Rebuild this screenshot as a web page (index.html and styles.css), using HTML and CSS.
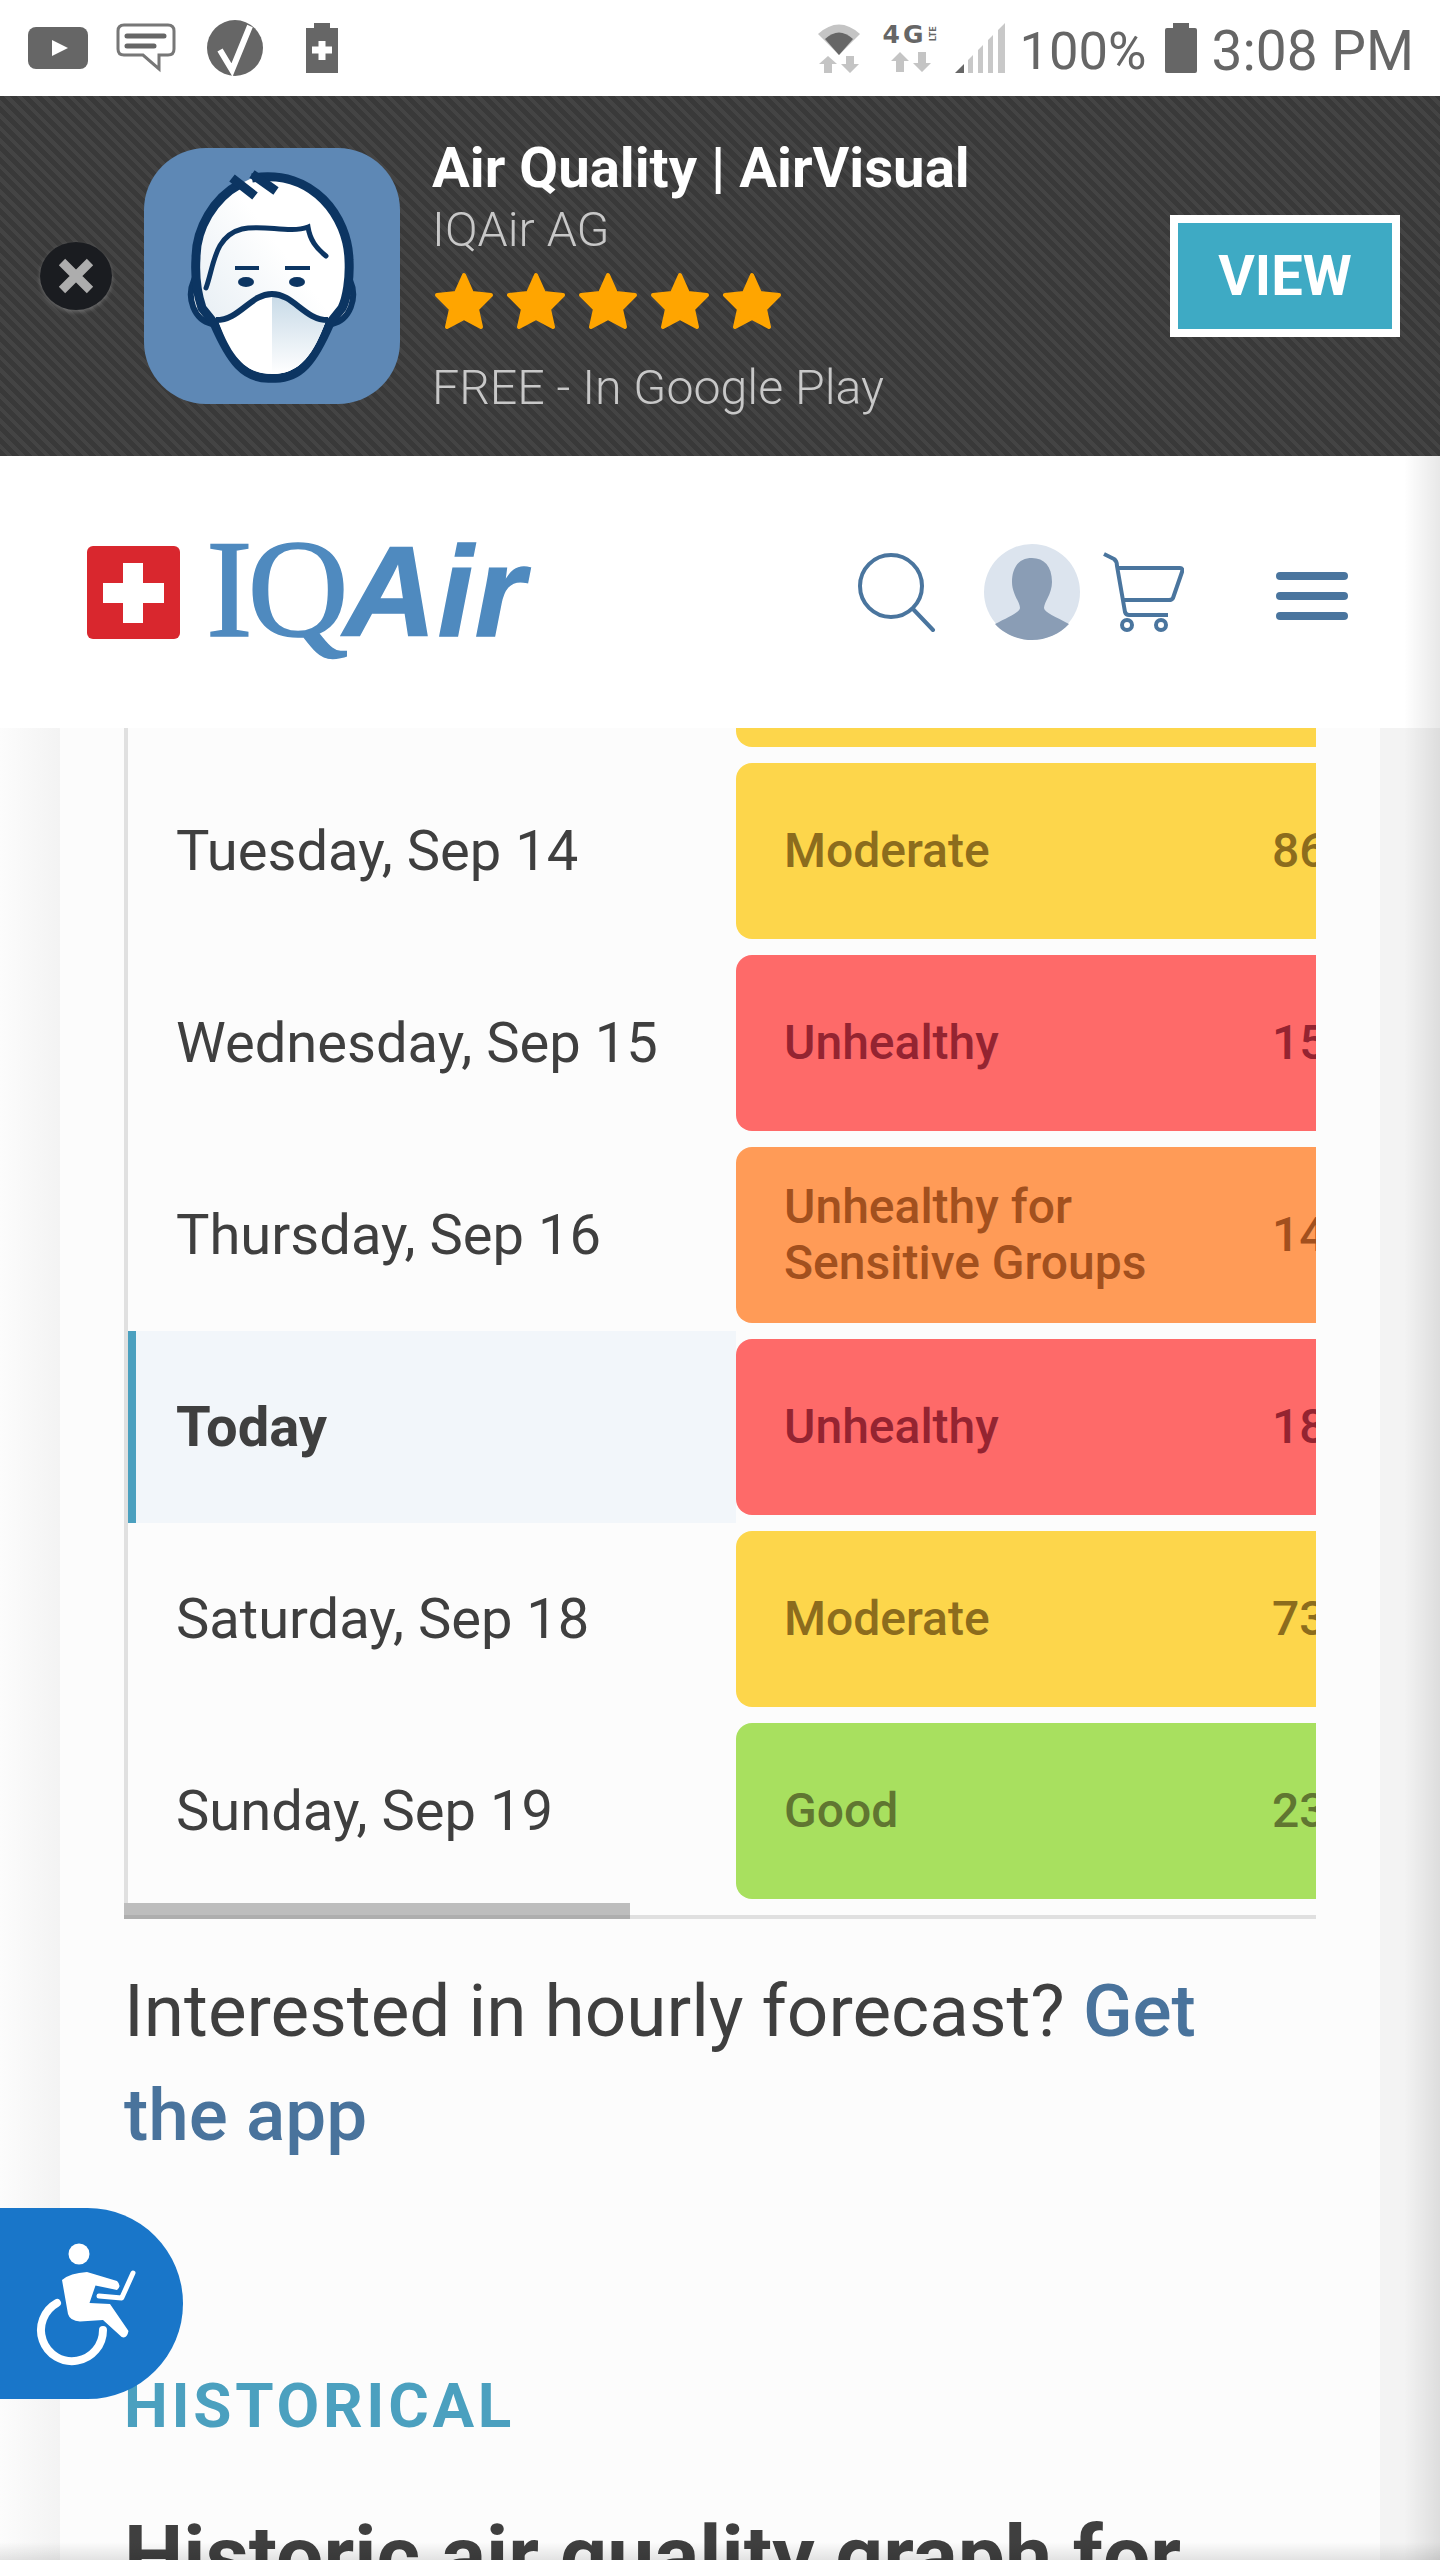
FILE: index.html
```html
<!DOCTYPE html>
<html lang="en">
<head>
    <meta charset="UTF-8">
    <title>Air quality forecast</title>
    <link rel="stylesheet" href="styles.css">
</head>
<body>
<div id="screen">
    <!-- phone status bar -->
    <div class="status">
        <div class="status-left">
            <svg class="ic-play" viewBox="0 0 60 42"><rect width="60" height="42" rx="8" fill="#666"/><path d="M24 13 L40 21 L24 29Z" fill="#fff"/></svg>
            <svg class="ic-msg" viewBox="0 0 60 50"><path d="M8 2 H52 Q58 2 58 8 V26 Q58 32 52 32 H43 V46 L27 32 H8 Q2 32 2 26 V8 Q2 2 8 2Z" fill="#fff" stroke="#777" stroke-width="3"/><path d="M11 13 H48 M11 23 H38" stroke="#666" stroke-width="5" stroke-linecap="round"/></svg>
            <svg class="ic-check" viewBox="0 0 58 56"><ellipse cx="29" cy="28" rx="28" ry="28" fill="#666"/><path d="M14 30 L26 50 L44 6" fill="none" stroke="#fff" stroke-width="6"/></svg>
            <svg class="ic-batt" viewBox="0 0 32 50"><path d="M8 0 H24 V5 H32 V50 H0 V5 H8Z" fill="#666"/><path d="M16 18 V37 M6 27 H26" stroke="#fff" stroke-width="7"/></svg>
        </div>
        <div class="status-right">
            <svg class="ic-wifi" viewBox="0 0 42 50"><path d="M0 11 Q21 -8 42 11 L21 32Z" fill="#c4c4c4"/><path d="M7 16 Q21 3 35 16 L21 32Z" fill="#666"/><path d="M10 33 L19 41 H14 V50 H6 V41 H1Z M32 50 L23 41 H28 V33 H36 V41 H41Z" fill="#c4c4c4"/></svg>
            <div class="net">
                <div class="net-label"><span class="net-4g">4G</span><span class="net-lte">LTE</span></div>
                <svg class="ic-arrows" viewBox="0 0 40 20"><path d="M9 0 L18 9 H13 V20 H5 V9 H0Z M31 20 L22 11 H27 V0 H35 V11 H40Z" fill="#c4c4c4"/></svg>
            </div>
            <svg class="ic-signal" viewBox="0 0 50 50"><path d="M0 50 L9 41 V50Z" fill="#666"/><path d="M13 37 L18 32 V50 H13Z M23 27 L28 22 V50 H23Z M33 17 L38 12 V50 H33Z M43 7 L50 0 V50 H43Z" fill="#c8c8c8"/></svg>
            <span class="status-text pct">100%</span>
            <svg class="ic-batt" viewBox="0 0 32 50"><path d="M8 0 H24 V5 H30 Q32 5 32 7 V48 Q32 50 30 50 H2 Q0 50 0 48 V7 Q0 5 2 5 H8Z" fill="#666"/></svg>
            <span class="status-text clock">3:08 PM</span>
        </div>
    </div>

    <!-- app install banner -->
    <div class="banner">
        <div class="close"><svg viewBox="0 0 36 36"><path d="M4 4 L32 32 M32 4 L4 32" stroke="#adadad" stroke-width="9"/></svg></div>
        <svg class="app-icon" viewBox="0 0 256 256">
            <defs>
                <linearGradient id="maskShade" x1="0" y1="0" x2="0" y2="1"><stop offset="0" stop-color="#c9dbe8"/><stop offset="1" stop-color="#fff"/></linearGradient>
                <linearGradient id="faceShade" x1="0" y1="1" x2="1" y2="0"><stop offset="0" stop-color="#dfe9f0"/><stop offset=".6" stop-color="#fff"/></linearGradient>
            </defs>
            <rect width="256" height="256" rx="62" fill="#5e88b5"/>
            <path d="M50 132 C42 150 50 172 68 176 L72 172 L60 130Z M206 132 C214 150 206 172 188 176 L184 172 L196 130Z" fill="#fff" stroke="#0c3562" stroke-width="6"/>
            <path d="M108 30 C170 20 204 70 205 112 C206 130 203 150 198 160 L186 175 C170 212 156 232 128 230 C100 232 86 212 70 175 L58 160 C53 145 51 125 52 110 C52 80 70 50 96 36" fill="url(#faceShade)" stroke="#0c3562" stroke-width="9" stroke-linejoin="round"/>
            <path d="M74 172 C96 172 106 147 128 147 C150 147 160 172 182 172 C170 206 156 226 128 226 C100 226 86 206 74 172Z" fill="#fff"/>
            <path d="M128 149 C148 149 160 172 182 172 C170 206 156 226 128 226Z" fill="url(#maskShade)"/>
            <path d="M72 172 C96 172 106 146 128 146 C150 146 160 172 184 172" fill="none" stroke="#0c3562" stroke-width="6"/>
            <path d="M62 140 C70 118 70 88 98 81 C120 76 145 86 164 79 C166 92 172 100 182 108" fill="none" stroke="#0c3562" stroke-width="5" stroke-linecap="round"/>
            <path d="M88 30 L111 48 M108 26 L132 43" stroke="#0c3562" stroke-width="9"/>
            <path d="M91 120 H115 M141 120 H166" stroke="#0c3562" stroke-width="4"/>
            <ellipse cx="102" cy="134" rx="8" ry="5" fill="#0c3562"/>
            <ellipse cx="153" cy="134" rx="8" ry="5" fill="#0c3562"/>
        </svg>
        <div class="banner-text">
            <div class="app-name">Air Quality | AirVisual</div>
            <div class="app-dev">IQAir AG</div>
            <div class="stars">
                <svg viewBox="0 0 60 58"><path class="star" d="M30 3 L38 21 L57 23 L43 37 L47 55 L30 46 L13 55 L17 37 L3 23 L22 21Z"/></svg>
                <svg viewBox="0 0 60 58"><path class="star" d="M30 3 L38 21 L57 23 L43 37 L47 55 L30 46 L13 55 L17 37 L3 23 L22 21Z"/></svg>
                <svg viewBox="0 0 60 58"><path class="star" d="M30 3 L38 21 L57 23 L43 37 L47 55 L30 46 L13 55 L17 37 L3 23 L22 21Z"/></svg>
                <svg viewBox="0 0 60 58"><path class="star" d="M30 3 L38 21 L57 23 L43 37 L47 55 L30 46 L13 55 L17 37 L3 23 L22 21Z"/></svg>
                <svg viewBox="0 0 60 58"><path class="star" d="M30 3 L38 21 L57 23 L43 37 L47 55 L30 46 L13 55 L17 37 L3 23 L22 21Z"/></svg>
            </div>
            <div class="app-price">FREE - In Google Play</div>
        </div>
        <div class="view-btn">VIEW</div>
    </div>

    <!-- site header -->
    <div class="site-header">
        <div class="swiss"><div class="swiss-v"></div><div class="swiss-h"></div></div>
        <div class="logo-text"><span class="logo-iq">IQ</span><span class="logo-air">Air</span></div>
        <div class="header-icons">
            <svg class="ic-search" viewBox="0 0 78 80"><ellipse cx="33" cy="34" rx="31" ry="31" fill="none" stroke="#4a759e" stroke-width="4"/><path d="M55 57 L75 78" stroke="#4a759e" stroke-width="4" stroke-linecap="round"/></svg>
            <svg class="ic-avatar" viewBox="0 0 96 96"><circle cx="48" cy="48" r="48" fill="#dce4ee"/><path d="M48 14 C60 14 68 22 68 38 C68 50 60 58 60 64 C60 68 72 73 85 80 C76 90 62 96 48 96 C34 96 20 90 11 80 C24 73 36 68 36 64 C36 58 28 50 28 38 C28 22 36 14 48 14Z" fill="#8a9db5"/></svg>
            <svg class="ic-cart" viewBox="0 0 81 80"><path d="M1 2 L11 7 Q14 9 14 14 L22 60 Q23 63 26 63 H65 M14 16 H77 Q80 16 79 20 L70 46 Q69 48 66 48 H19" fill="none" stroke="#4a759e" stroke-width="4" stroke-linejoin="round"/><circle cx="24" cy="73" r="5" fill="none" stroke="#4a759e" stroke-width="4"/><circle cx="58" cy="73" r="5" fill="none" stroke="#4a759e" stroke-width="4"/></svg>
            <div class="burger"><span></span><span></span><span></span></div>
        </div>
    </div>

    <!-- page body -->
    <div class="main">
        <div class="card">
            <div class="forecast">
                <div class="row">
                    <div class="day"></div>
                    <div class="pill moderate"></div>
                </div>
                <div class="row">
                    <div class="day">Tuesday, Sep 14</div>
                    <div class="pill moderate"><span class="label">Moderate</span><span class="val">86</span></div>
                </div>
                <div class="row">
                    <div class="day">Wednesday, Sep 15</div>
                    <div class="pill unhealthy"><span class="label">Unhealthy</span><span class="val">15</span></div>
                </div>
                <div class="row">
                    <div class="day">Thursday, Sep 16</div>
                    <div class="pill sensitive"><span class="label">Unhealthy for<br>Sensitive Groups</span><span class="val">14</span></div>
                </div>
                <div class="row">
                    <div class="day today">Today</div>
                    <div class="pill unhealthy"><span class="label">Unhealthy</span><span class="val">18</span></div>
                </div>
                <div class="row">
                    <div class="day">Saturday, Sep 18</div>
                    <div class="pill moderate"><span class="label">Moderate</span><span class="val">73</span></div>
                </div>
                <div class="row">
                    <div class="day">Sunday, Sep 19</div>
                    <div class="pill good"><span class="label">Good</span><span class="val">23</span></div>
                </div>
            </div>
            <div class="scroll-track"><div class="scroll-thumb"></div></div>
            <p class="hourly">Interested in hourly forecast? <a href="#">Get the app</a></p>
            <div class="kicker">HISTORICAL</div>
            <h2 class="graph-title">Historic air quality graph for</h2>
        </div>
    </div>

    <!-- overlays -->
    <div class="a11y">
        <svg viewBox="0 0 183 191">
            <circle cx="79" cy="46" r="10.5" fill="#fff"/>
            <path d="M62 72 Q70 65 87 64 L117 73 Q122 78 117 82 L95.500 77.500 L89.500 95 L110 96 L128.500 123 Q127 131 121.700 129 L103 112 L80 113.500 Q70 113 68 106Z" fill="#fff"/>
            <path d="M133 65 L121.700 90 L99 88" fill="none" stroke="#fff" stroke-width="5" stroke-linecap="round" stroke-linejoin="round"/>
            <path d="M57 95 A31 31 0 1 0 103 122" fill="none" stroke="#fff" stroke-width="8" stroke-linecap="round"/>
        </svg>
    </div>
    <div class="edge-right"></div>
    <div class="edge-bottom"></div>
</div>
</body>
</html>
```
FILE: styles.css
```css
*{
    margin: 0;
    padding: 0;
    box-sizing: border-box;
}
html,body{
    background: #fff;
}
#screen{
    position: relative;
    display: flex;
    flex-direction: column;
    width: 1440px;
    height: 2560px;
    overflow: hidden;
    font-family: Roboto, "Liberation Sans", sans-serif;
    color: #3f3f3f;
}

/* status bar */
.status{
    display: flex;
    justify-content: space-between;
    align-items: center;
    height: 96px;
    padding: 0 26px 0 28px;
    background: #fff;
    flex-shrink: 0;
}
.status-left,.status-right{
    display: flex;
    align-items: center;
}
.ic-play{
    width: 60px;
    height: 42px;
    margin-right: 28px;
}
.ic-msg{
    width: 60px;
    height: 50px;
    margin-right: 30px;
}
.ic-check{
    width: 58px;
    height: 56px;
    margin-right: 42px;
}
.ic-batt{
    width: 32px;
    height: 50px;
}
.ic-wifi{
    width: 42px;
    height: 50px;
    margin-right: 23px;
}
.net{
    width: 54px;
    margin-right: 18px;
}
.net-label{
    display: flex;
    align-items: center;
    height: 20px;
    margin-bottom: 7px;
}
.net-4g{
    font-family: "DejaVu Sans", sans-serif;
    font-size: 25px;
    font-weight: 700;
    line-height: 20px;
    color: #666;
    letter-spacing: 3px;
}
.net-lte{
    font-size: 9px;
    font-weight: 700;
    color: #666;
    transform: rotate(-90deg);
    width: 12px;
}
.ic-arrows{
    display: block;
    width: 40px;
    height: 20px;
    margin-left: 8px;
}
.ic-signal{
    width: 50px;
    height: 50px;
    margin-right: 15px;
}
.status-text{
    font-size: 52.500px;
    line-height: 60px;
    color: #666;
    margin-top: 5px;
}
.clock{
    font-size: 55px;
}
.pct{
    margin-right: 18px;
}
.status-right .ic-batt{
    margin-right: 15px;
}

/* banner */
.banner{
    display: flex;
    align-items: center;
    height: 360px;
    flex-shrink: 0;
    background: repeating-linear-gradient(45deg, #393939 0, #393939 5px, #444 5px, #444 9px);
}
.close{
    display: flex;
    align-items: center;
    justify-content: center;
    width: 72px;
    height: 68px;
    margin: 0 32px 0 40px;
    border-radius: 50%;
    background: #1a1c20;
    box-shadow: 0 2px 4px rgba(255,255,255,.25);
}
.close svg{
    width: 36px;
    height: 36px;
}
.app-icon{
    width: 256px;
    height: 256px;
    flex-shrink: 0;
}
.banner-text{
    align-self: flex-start;
    padding: 42px 0 0 32px;
}
.app-name{
    font-size: 56.300px;
    font-weight: 700;
    line-height: 60px;
    color: #fff;
}
.app-dev,.app-price{
    font-size: 48.300px;
    font-weight: 300;
    line-height: 50px;
    color: #c8c8c8;
}
.app-dev{
    margin-top: 7px;
}
.stars{
    display: flex;
    gap: 12px;
    margin: 17px 0 0 2px;
}
.stars svg{
    width: 60px;
    height: 58px;
}
.star{
    fill: #ffa500;
    stroke: #ffa500;
    stroke-width: 4;
    stroke-linejoin: round;
}
.app-price{
    margin-top: 33px;
}
.view-btn{
    width: 230px;
    height: 122px;
    margin: 0 40px 0 auto;
    border: 8px solid #fff;
    background: #3eaac4;
    color: #fff;
    font-size: 56px;
    font-weight: 700;
    line-height: 106px;
    text-align: center;
}

/* site header */
.site-header{
    display: flex;
    align-items: center;
    height: 272px;
    flex-shrink: 0;
    padding-left: 87px;
    background: #fff;
}
.swiss{
    position: relative;
    width: 93px;
    height: 93px;
    border-radius: 6px;
    background: #d9272e;
}
.swiss-v,.swiss-h{
    position: absolute;
    background: #fff;
}
.swiss-v{
    left: 16px;
    top: 37px;
    width: 61px;
    height: 20px;
}
.swiss-h{
    left: 36px;
    top: 17px;
    width: 20px;
    height: 60px;
}
.logo-text{
    margin: 36px 0 0 26px;
    color: #4f8abf;
    line-height: 120px;
    white-space: nowrap;
    -webkit-text-stroke: 1.500px #4f8abf;
}
.logo-iq{
    font-family: "Liberation Serif", serif;
    font-size: 140px;
    letter-spacing: -5px;
}
.logo-air{
    font-family: "Liberation Sans", sans-serif;
    font-size: 128px;
    font-weight: 700;
    font-style: italic;
    letter-spacing: 1.500px;
}
.header-icons{
    display: flex;
    align-items: center;
    margin-left: auto;
    padding-right: 92px;
}
.ic-search{
    width: 78px;
    height: 80px;
    margin-right: 48px;
}
.ic-avatar{
    width: 96px;
    height: 96px;
    margin-right: 23px;
}
.ic-cart{
    width: 81px;
    height: 80px;
    margin-right: 92px;
}
.burger{
    display: flex;
    flex-direction: column;
    gap: 12px;
    width: 72px;
    margin-top: 8px;
}
.burger span{
    height: 8px;
    border-radius: 4px;
    background: #4a759e;
}

/* page body */
.main{
    flex: 1;
    overflow: hidden;
    padding: 0 60px;
    background: linear-gradient(90deg, #fcfcfc 0, #f3f3f3 60px, #f3f3f3 100%);
}
.card{
    display: flow-root;
    height: 100%;
    padding: 0 64px;
    background: #fcfcfc;
}
.forecast{
    margin-top: -165px;
    border-left: 4px solid #e0e0e0;
    overflow: hidden;
}
.row{
    display: flex;
    height: 192px;
}
.day{
    display: flex;
    align-items: center;
    width: 608px;
    padding-left: 48px;
    font-size: 56.100px;
    flex-shrink: 0;
}
.today{
    border-left: 8px solid #4ba0bf;
    padding-left: 40px;
    background: #f2f6fa;
    font-weight: 700;
}
.pill{
    display: flex;
    align-items: center;
    width: 700px;
    height: 176px;
    margin-top: 8px;
    padding-left: 48px;
    border-radius: 16px;
    font-size: 48px;
    font-weight: 500;
    line-height: 56px;
    flex-shrink: 0;
}
.label{
    width: 488px;
    flex-shrink: 0;
}
.moderate{
    background: #fdd64b;
    color: #8c6c1d;
}
.unhealthy{
    background: #fe6a69;
    color: #942431;
}
.sensitive{
    background: #ff9b57;
    color: #a2501e;
}
.good{
    background: #a8e05f;
    color: #607631;
}
.scroll-track{
    height: 16px;
    margin-top: -4px;
    border-bottom: 4px solid #e0e0e0;
}
.scroll-thumb{
    width: 506px;
    height: 16px;
    background: #bdbdbd;
    border-bottom: 4px solid #aeaeae;
}
.hourly{
    margin-top: 40px;
    font-size: 72.900px;
    line-height: 104px;
}
.hourly a{
    color: #49739c;
    font-weight: 500;
    text-decoration: none;
}
.kicker{
    margin-top: 203px;
    color: #4ba0bf;
    font-size: 62px;
    font-weight: 700;
    line-height: 72px;
    letter-spacing: 3.700px;
}
.graph-title{
    margin-top: 67px;
    font-size: 84px;
    font-weight: 700;
    line-height: 96px;
    white-space: nowrap;
}

/* things lying over the page */
.a11y{
    position: absolute;
    left: 0;
    top: 2208px;
    width: 183px;
    height: 191px;
    border-radius: 0 96px 96px 0;
    background: #1976c9;
}
.a11y svg{
    display: block;
    width: 183px;
    height: 191px;
}
.edge-right{
    position: absolute;
    right: 0;
    top: 456px;
    width: 36px;
    height: 2104px;
    background: linear-gradient(90deg, rgba(0,0,0,0), rgba(0,0,0,.09));
}
.edge-bottom{
    position: absolute;
    left: 0;
    bottom: 0;
    width: 100%;
    height: 18px;
    background: linear-gradient(rgba(0,0,0,0), rgba(0,0,0,.1));
}
```
